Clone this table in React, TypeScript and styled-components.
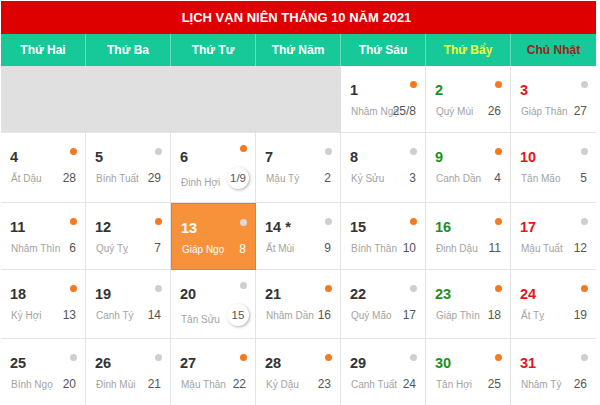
import React from "react";
import styled, { createGlobalStyle, css } from "styled-components";

const Global = createGlobalStyle`
  html, body { margin: 0; padding: 0; background: #fff; }
  body { font-family: "Liberation Sans", Arial, sans-serif; }
`;

const Wrap = styled.div`
  width: 595px;
  margin: 1px 0 0 1px;
`;

const Title = styled.div`
  height: 33px;
  background: #de0000;
  color: #fff;
  font-weight: bold;
  font-size: 13px;
  display: flex;
  align-items: center;
  justify-content: center;
  padding-right: 4px;
  box-sizing: border-box;
`;

const HeadRow = styled.div`
  display: grid;
  grid-template-columns: repeat(7, 85px);
  height: 32px;
  background: #17c899;
`;

const HeadCell = styled.div<{ $c: string }>`
  display: flex;
  align-items: center;
  justify-content: center;
  font-size: 12px;
  font-weight: bold;
  color: ${(p) => p.$c};
  border-right: 1px solid rgba(255, 255, 255, 0.35);
  &:last-child { border-right: none; }
`;

const Body = styled.div`
  display: grid;
  grid-template-columns: repeat(7, 85px);
  grid-template-rows: 67px 70px 67px 69px 69px;
`;

const Empty = styled.div`
  grid-column: span 4;
  background: #e0e0e0;
  border-bottom: 1px solid #e6e6e6;
`;

const Cell = styled.div<{ $today?: boolean; $last?: boolean }>`
  position: relative;
  box-sizing: border-box;
  padding: 16px 9px 0 9px;
  border-right: 1px solid #e4e4e4;
  border-bottom: 1px solid #e4e4e4;
  ${(p) => p.$last && css`border-right: none;`}
  ${(p) =>
    p.$today &&
    css`
      background: #f7923a;
      border: 1px solid #ea7a2c;
    `}
`;

const Num = styled.div<{ $color: string }>`
  font-size: 14.5px;
  font-weight: bold;
  line-height: 16px;
  color: ${(p) => p.$color};
`;

const Dot = styled.span<{ $color: string; $up?: boolean }>`
  position: absolute;
  top: ${(p) => (p.$up ? "12px" : "15px")};
  right: 8px;
  width: 7px;
  height: 7px;
  border-radius: 50%;
  background: ${(p) => p.$color};
`;

const Bottom = styled.div`
  display: flex;
  align-items: center;
  margin-top: 6px;
  height: 14px;
`;

const CanChi = styled.span<{ $today?: boolean; $drop?: boolean }>`
  flex: 1;
  min-width: 0;
  white-space: nowrap;
  font-size: 10px;
  margin-left: 1px;
  color: ${(p) => (p.$today ? "#fff" : "#a3a3a3")};
  ${(p) => p.$drop && css`margin-top: 9px;`}
`;

const Lunar = styled.span<{ $today?: boolean; $circle?: boolean }>`
  flex: none;
  font-size: 12px;
  color: ${(p) => (p.$today ? "#fff" : "#555")};
  ${(p) =>
    p.$circle &&
    css`
      width: 22px;
      height: 22px;
      margin: -4px -3px -4px 0;
      border-radius: 50%;
      background: #fff;
      box-shadow: 1px 1px 3px rgba(0, 0, 0, 0.3);
      display: flex;
      align-items: center;
      justify-content: center;
      font-size: 11.5px;
    `}
`;

type Day = {
  d: string;
  cc: string;
  l: string;
  dot: "o" | "g" | "w";
  circle?: boolean;
  today?: boolean;
};

const days: Day[] = [
  { d: "1", cc: "Nhâm Ngọ", l: "25/8", dot: "o" },
  { d: "2", cc: "Quý Mùi", l: "26", dot: "o" },
  { d: "3", cc: "Giáp Thân", l: "27", dot: "g" },
  { d: "4", cc: "Ất Dậu", l: "28", dot: "o" },
  { d: "5", cc: "Bính Tuất", l: "29", dot: "g" },
  { d: "6", cc: "Đinh Hợi", l: "1/9", dot: "o", circle: true },
  { d: "7", cc: "Mậu Tý", l: "2", dot: "g" },
  { d: "8", cc: "Kỷ Sửu", l: "3", dot: "g" },
  { d: "9", cc: "Canh Dần", l: "4", dot: "o" },
  { d: "10", cc: "Tân Mão", l: "5", dot: "g" },
  { d: "11", cc: "Nhâm Thìn", l: "6", dot: "o" },
  { d: "12", cc: "Quý Tỵ", l: "7", dot: "o" },
  { d: "13", cc: "Giáp Ngọ", l: "8", dot: "w", today: true },
  { d: "14 *", cc: "Ất Mùi", l: "9", dot: "g" },
  { d: "15", cc: "Bính Thân", l: "10", dot: "o" },
  { d: "16", cc: "Đinh Dậu", l: "11", dot: "o" },
  { d: "17", cc: "Mậu Tuất", l: "12", dot: "g" },
  { d: "18", cc: "Kỷ Hợi", l: "13", dot: "o" },
  { d: "19", cc: "Canh Tý", l: "14", dot: "g" },
  { d: "20", cc: "Tân Sửu", l: "15", dot: "g", circle: true },
  { d: "21", cc: "Nhâm Dần", l: "16", dot: "o" },
  { d: "22", cc: "Quý Mão", l: "17", dot: "g" },
  { d: "23", cc: "Giáp Thìn", l: "18", dot: "o" },
  { d: "24", cc: "Ất Tỵ", l: "19", dot: "o" },
  { d: "25", cc: "Bính Ngọ", l: "20", dot: "g" },
  { d: "26", cc: "Đinh Mùi", l: "21", dot: "g" },
  { d: "27", cc: "Mậu Thân", l: "22", dot: "o" },
  { d: "28", cc: "Kỷ Dậu", l: "23", dot: "o" },
  { d: "29", cc: "Canh Tuất", l: "24", dot: "g" },
  { d: "30", cc: "Tân Hợi", l: "25", dot: "o" },
  { d: "31", cc: "Nhâm Tý", l: "26", dot: "g" },
];

const heads: [string, string][] = [
  ["Thứ Hai", "#fff"],
  ["Thứ Ba", "#fff"],
  ["Thứ Tư", "#fff"],
  ["Thứ Năm", "#fff"],
  ["Thứ Sáu", "#fff"],
  ["Thứ Bẩy", "#f2ff3a"],
  ["Chủ Nhật", "#9e231c"],
];

const dotColors = { o: "#f57a1f", g: "#cfcfcf", w: "#dcdcdc" };

export default function App() {
  return (
    <>
      <Global />
      <Wrap>
        <Title>LỊCH VẠN NIÊN THÁNG 10 NĂM 2021</Title>
        <HeadRow>
          {heads.map(([t, c]) => (
            <HeadCell key={t} $c={c}>
              {t}
            </HeadCell>
          ))}
        </HeadRow>
        <Body>
          <Empty />
          {days.map((day, i) => {
            const col = (i + 4) % 7;
            const color = day.today
              ? "#fff"
              : col === 5
              ? "#1f8f1f"
              : col === 6
              ? "#e5141c"
              : "#333";
            return (
              <Cell key={day.d} $today={day.today} $last={col === 6}>
                <Dot $color={dotColors[day.dot]} $up={day.circle} />
                <Num $color={color}>{day.d}</Num>
                <Bottom>
                  <CanChi $today={day.today} $drop={day.circle}>
                    {day.cc}
                  </CanChi>
                  <Lunar $today={day.today} $circle={day.circle}>
                    {day.l}
                  </Lunar>
                </Bottom>
              </Cell>
            );
          })}
        </Body>
      </Wrap>
    </>
  );
}
